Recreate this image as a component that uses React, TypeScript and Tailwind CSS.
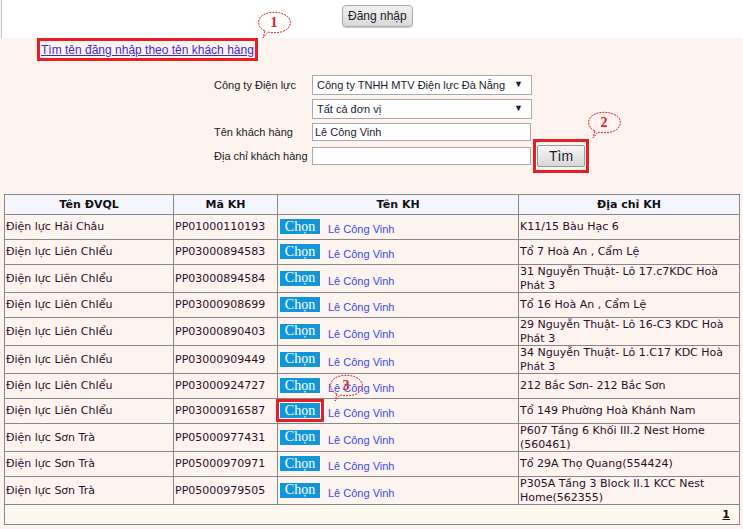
import React from 'react'

const rows = [
  { dv: 'Điện lực Hải Châu', ma: 'PP01000110193', addr: 'K11/15 Bàu Hạc 6' },
  { dv: 'Điện lực Liên ChIểu', ma: 'PP03000894583', addr: 'Tổ 7 Hoà An , Cẩm Lệ' },
  { dv: 'Điện lực Liên ChIểu', ma: 'PP03000894584', addr: '31 Nguyễn Thuật- Lô 17.c7KDC Hoà Phát 3' },
  { dv: 'Điện lực Liên ChIểu', ma: 'PP03000908699', addr: 'Tổ 16 Hoà An , Cẩm Lệ' },
  { dv: 'Điện lực Liên ChIểu', ma: 'PP03000890403', addr: '29 Nguyễn Thuật- Lô 16-C3 KDC Hoà Phát 3' },
  { dv: 'Điện lực Liên ChIểu', ma: 'PP03000909449', addr: '34 Nguyễn Thuật- Lô 1.C17 KDC Hoà Phát 3' },
  { dv: 'Điện lực Liên ChIểu', ma: 'PP03000924727', addr: '212 Bắc Sơn- 212 Bắc Sơn' },
  { dv: 'Điện lực Liên ChIểu', ma: 'PP03000916587', addr: 'Tổ 149 Phường Hoà Khánh Nam', marked: true },
  { dv: 'Điện lực Sơn Trà', ma: 'PP05000977431', addr: 'P607 Tầng 6 Khối III.2 Nest Home (560461)' },
  { dv: 'Điện lực Sơn Trà', ma: 'PP05000970971', addr: 'Tổ 29A Thọ Quang(554424)' },
  { dv: 'Điện lực Sơn Trà', ma: 'PP05000979505', addr: 'P305A Tầng 3 Block II.1 KCC Nest Home(562355)' },
]

function Bubble({ n, className }: { n: string; className: string }) {
  return (
    <div className={`absolute ${className}`}>
      <svg width="40" height="30" viewBox="0 0 40 30">
        <path
          d="M10 21 C2 18 1 8 10 4 C17 1 28 2 33 7 C38 12 35 20 26 22 C21 23 16 23 13 22 L8 28 Z"
          fill="none"
          stroke="#e8222a"
          strokeWidth="1"
          strokeDasharray="2 1"
        />
        <text x="19" y="17" textAnchor="middle" fontFamily="'Liberation Serif', serif" fontWeight="bold" fontSize="14" fill="#e0222a">
          {n}
        </text>
      </svg>
    </div>
  )
}

function Select({ text }: { text: string }) {
  return (
    <div className="flex h-[20px] w-[220px] items-center justify-between whitespace-nowrap border border-[#a9a9a9] bg-white pl-[4px] pr-[8px] text-[11px] text-[#1e1a2e]">
      <span>{text}</span>
      <span className="text-[9px]">▼</span>
    </div>
  )
}

export default function App() {
  return (
    <div className="relative h-[529px] w-[743px] overflow-hidden bg-[#fdf3ef] font-['Liberation_Sans',Arial,sans-serif]">
      <div className="ml-px flex h-[38px] border-l border-[#c4c4c4] bg-white pl-[340px] pt-[5px]">
        <button className="h-[22px] rounded-[4px] border border-[#aaa] bg-gradient-to-b from-[#f2f2f2] to-[#d9d9d9] px-[5px] text-[12px] text-[#1e1a2e] shadow-[0_1px_1px_rgba(0,0,0,0.2)]">
          Đăng nhập
        </button>
      </div>

      <div className="flex flex-col">
        <div className="ml-[37px] flex h-[23px] w-[221px] items-center whitespace-nowrap border-[3px] border-[#e61e25] pl-px">
          <a href="#" className="text-[12px] text-[#3b2bd6] underline">
            Tìm tên đăng nhập theo tên khách hàng
          </a>
        </div>

        <div className="mt-[14px] grid grid-cols-[98px_auto] grid-rows-[24px_24px_24px_24px] whitespace-nowrap pl-[214px] text-[11px] text-[#222]">
          <div className="flex h-[20px] items-center">Công ty Điện lực</div>
          <Select text="Công ty TNHH MTV Điện lực Đà Nẵng" />
          <div />
          <Select text="Tất cả đơn vị" />
          <div className="flex h-[18px] items-center">Tên khách hàng</div>
          <input
            readOnly
            value="Lê Công Vinh"
            className="h-[18px] w-[219px] border border-[#a9a9a9] bg-white px-[2px] text-[11px] text-[#1e1a2e] outline-none"
          />
          <div className="flex h-[18px] items-center">Địa chỉ khách hàng</div>
          <div className="flex h-[18px] items-center gap-[2px]">
            <input readOnly value="" className="h-[18px] w-[219px] border border-[#a9a9a9] bg-white outline-none" />
            <div className="flex h-[34px] w-[56px] shrink-0 items-center justify-center border-[3px] border-[#e61e25]">
              <button className="h-[22px] w-[48px] rounded-[2px] border border-[#9a9a9a] bg-gradient-to-b from-[#f6f6f6] to-[#d8d8d8] text-[14px] text-[#1e1a2e]">
                Tìm
              </button>
            </div>
          </div>
        </div>

        <table className="ml-[4px] mt-[23px] w-[735px] table-fixed border-collapse border border-[#888] font-['DejaVu_Sans',Verdana,sans-serif] text-[11px] leading-[13.5px] text-[#2a0f2a]">
          <colgroup>
            <col className="w-[169px]" />
            <col className="w-[104px]" />
            <col className="w-[241px]" />
            <col className="w-[221px]" />
          </colgroup>
          <thead>
            <tr className="h-[20px] bg-[#f5f6fd] font-bold text-[#111]">
              <th className="border border-[#888]">Tên ĐVQL</th>
              <th className="border border-[#888]">Mã KH</th>
              <th className="border border-[#888]">Tên KH</th>
              <th className="border border-[#888]">Địa chỉ KH</th>
            </tr>
          </thead>
          <tbody>
            {rows.map((r) => (
              <tr key={r.ma} className="h-[25px] bg-[#fdf3ef]">
                <td className="border border-[#888] px-px py-0 align-middle">{r.dv}</td>
                <td className="border border-[#888] px-px py-0 align-middle">{r.ma}</td>
                <td className="border border-[#888] py-0 pl-[2px] align-middle">
                  <div className="flex h-[16px] items-end gap-[8px]">
                    <button
                      className={`mb-px h-[15px] w-[40px] bg-[#1196d9] font-['Liberation_Serif',serif] text-[14px] leading-[14px] text-white ${
                        r.marked ? 'outline-[3px] outline-offset-[1px] outline-[#e61e25] outline-solid' : ''
                      }`}
                    >
                      Chọn
                    </button>
                    <a href="#" className="font-['Liberation_Sans',Arial,sans-serif] text-[11px] leading-[12px] text-[#3a4be8]">
                      Lê Công Vinh
                    </a>
                  </div>
                </td>
                <td className="border border-[#888] py-0 pl-px pr-[4px] align-middle">{r.addr}</td>
              </tr>
            ))}
            <tr className="h-[20px] bg-[#fdf9ef]">
              <td colSpan={4} className="border border-[#888] pr-[9px] text-right">
                <a href="#" className="font-bold text-[#2a0a0a] underline">
                  1
                </a>
              </td>
            </tr>
          </tbody>
        </table>
      </div>

      <Bubble n="1" className="left-[255px] top-[10px]" />
      <Bubble n="2" className="left-[585px] top-[110px]" />
      <Bubble n="3" className="left-[327px] top-[373px]" />
    </div>
  )
}
